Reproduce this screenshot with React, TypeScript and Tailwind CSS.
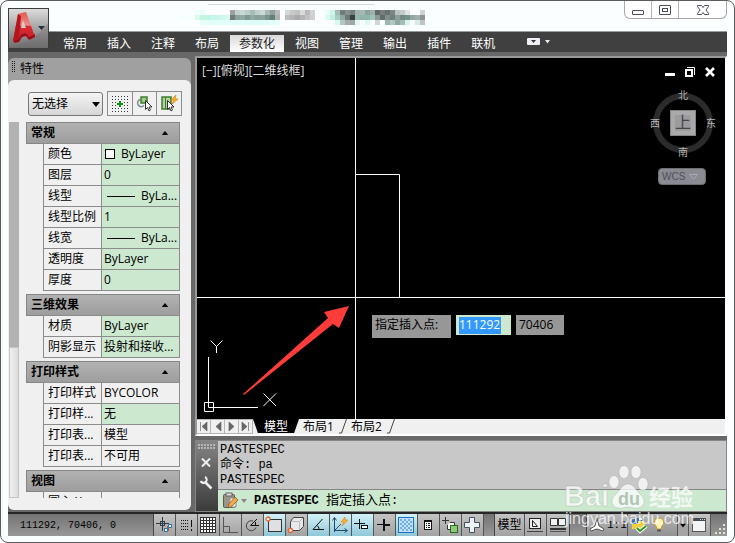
import React from "react";

type Row = { label: string; value: string; kind?: "swatch" | "line" | "plain" };

const menuItems = [
  "常用",
  "插入",
  "注释",
  "布局",
  "参数化",
  "视图",
  "管理",
  "输出",
  "插件",
  "联机",
];

const sections: { title: string; rows: Row[] }[] = [
  {
    title: "常规",
    rows: [
      { label: "颜色", value: "ByLayer", kind: "swatch" },
      { label: "图层", value: "0" },
      { label: "线型", value: "ByLa...", kind: "line" },
      { label: "线型比例", value: "1" },
      { label: "线宽", value: "ByLa...", kind: "line" },
      { label: "透明度", value: "ByLayer" },
      { label: "厚度", value: "0" },
    ],
  },
  {
    title: "三维效果",
    rows: [
      { label: "材质", value: "ByLayer" },
      { label: "阴影显示", value: "投射和接收..." },
    ],
  },
  {
    title: "打印样式",
    rows: [
      { label: "打印样式", value: "BYCOLOR", kind: "plain" },
      { label: "打印样...", value: "无" },
      { label: "打印表...", value: "模型", kind: "plain" },
      { label: "打印表...", value: "不可用", kind: "plain" },
    ],
  },
  {
    title: "视图",
    rows: [{ label: "圆心 X...", value: "", kind: "plain" }],
  },
];

// pixelated document name, 5px blocks
const titleBlocks: [number, number, string][] = [
  [0, 5, "#f3fffb"],
  [15, 0, "#effffa"], [20, 0, "#eafff8"], [15, 5, "#d8fbee"], [20, 5, "#c8f3e3"], [25, 5, "#bff5e5"],
  [30, 5, "#c9f6e9"], [35, 5, "#caf6ea"], [40, 5, "#cff7ed"], [45, 5, "#d8f8f0"],
  [50, 0, "#9ba3a1"], [55, 0, "#c3cfcc"], [60, 0, "#c7d9d5"], [65, 0, "#bacfc9"], [70, 0, "#a9bdb9"],
  [75, 0, "#c0cfcc"], [80, 0, "#cbdad7"], [85, 0, "#a9b9b6"], [90, 0, "#91a19d"], [95, 0, "#b9bcbc"],
  [50, 5, "#6e7d79"], [55, 5, "#8aa29c"], [60, 5, "#91aba4"], [65, 5, "#7e9b92"], [70, 5, "#93aaa4"],
  [75, 5, "#87a09a"], [80, 5, "#8ba59e"], [85, 5, "#78958c"], [90, 5, "#617f76"], [95, 5, "#b0b3b2"],
  [20, 10, "#e4fff7"], [30, 10, "#e0fff8"], [40, 10, "#e3fff9"], [50, 10, "#dffdf8"], [60, 10, "#defdf8"],
  [70, 10, "#dcfcf7"], [80, 10, "#dffdf8"], [90, 10, "#e3fffb"],
  [105, 0, "#d5d5d5"], [110, 0, "#c9c9c9"], [115, 0, "#c2c2c2"], [120, 0, "#dadada"], [125, 0, "#b9b9b9"], [130, 0, "#d2d2d2"],
  [105, 5, "#bdbdbd"], [110, 5, "#b4b4b4"], [115, 5, "#a9a9a9"], [120, 5, "#b4b4b4"], [125, 5, "#c2c2c2"], [130, 5, "#cfcfcf"],
  [145, 0, "#e6fff8"], [150, 0, "#cdf6eb"], [155, 0, "#a8b8b4"], [160, 0, "#707e7a"], [165, 0, "#87908e"],
  [170, 0, "#727f7c"], [175, 0, "#9fb2ae"], [180, 0, "#a7b9b4"], [185, 0, "#8da29d"], [190, 0, "#9bb1ab"],
  [195, 0, "#606a68"], [200, 0, "#77807f"], [205, 0, "#69726f"], [210, 0, "#7c8785"], [215, 0, "#b9c5c3"], [220, 0, "#c2cac8"], [225, 0, "#dde5e3"], [240, 0, "#d2d2d2"],
  [145, 5, "#dffaf3"], [150, 5, "#bdf0df"], [155, 5, "#a8cdc3"], [160, 5, "#91a8a2"], [165, 5, "#6c7a77"],
  [170, 5, "#35423f"], [175, 5, "#9ab6af"], [180, 5, "#8fb5a9"], [185, 5, "#8db7aa"], [190, 5, "#a1c0b7"],
  [195, 5, "#899a96"], [200, 5, "#5e6e6a"], [205, 5, "#7f8e8b"], [210, 5, "#6d8079"], [215, 5, "#8da09b"], [220, 5, "#738a84"], [225, 5, "#75938b"], [230, 5, "#91aaa4"], [235, 5, "#a2b1ad"], [240, 5, "#8d9391"],
  [155, 10, "#d6f8ef"], [160, 10, "#b7c7c3"], [165, 10, "#a4adab"], [170, 10, "#9ca9a6"], [175, 10, "#e0f7f2"], [185, 10, "#dafaf4"], [195, 10, "#cdd8d6"],
  [205, 10, "#9fb5af"], [210, 10, "#b4c6c2"], [215, 10, "#8fa8a1"], [220, 10, "#a4bdb6"], [225, 10, "#d9f2ed"], [235, 10, "#d9ebe7"], [240, 10, "#c1c3c2"],
];

const Triangle: React.FC<{ up?: boolean; className?: string }> = ({ up, className }) => (
  <svg width="8" height="5" viewBox="0 0 8 5" className={className}>
    <path d={up ? "M0 5 4 0 8 5Z" : "M0 0h8L4 5Z"} fill="currentColor" />
  </svg>
);

const TitleBar: React.FC = () => (
  <header className="relative h-[30px] flex justify-end">
    <svg width="265" height="28" className="absolute left-[172px] top-0" shapeRendering="crispEdges">
      <rect x="28" y="3" width="166" height="1" fill="#d5d8da" />
      <g transform="translate(0 9)">
        {titleBlocks.map(([x, y, fill]) => (
          <rect key={`${x}-${y}`} x={x} y={y} width={y === 10 && x < 100 ? 10 : 5} height="5" fill={fill} />
        ))}
      </g>
    </svg>
    <div className="flex h-[18px] rounded-b-md border border-t-0 border-[#a6a6a6] bg-white text-[#4b4b62]">
      <button aria-label="最小化" className="w-[27px] flex items-center justify-center border-r border-[#b4b4b4]">
        <svg width="12" height="12" viewBox="0 0 12 12" fill="#fff" stroke="currentColor">
          <rect x=".5" y="6.5" width="11" height="4" rx=".5" />
        </svg>
      </button>
      <button aria-label="最大化" className="w-[27px] flex items-center justify-center border-r border-[#b4b4b4]">
        <svg width="12" height="12" viewBox="0 0 12 12" fill="#fff" stroke="currentColor">
          <rect x=".5" y="1.5" width="11" height="9" rx=".5" />
          <rect x="3.5" y="4.5" width="5" height="3" />
        </svg>
      </button>
      <button aria-label="关闭" className="w-[47px] flex items-center justify-center">
        <svg width="12" height="12" viewBox="0 0 12 12" fill="#fff" stroke="currentColor">
          <path d="M.5 1.5h4L6 3.500 7.500 1.500h4v1L9 6l2.500 3.500v1h-4L6 8.500 4.500 10.500h-4v-1L3 6 .5 2.500Z" />
        </svg>
      </button>
    </div>
  </header>
);

const AppButton: React.FC = () => (
  <button
    aria-label="应用程序菜单"
    className="absolute left-[7px] top-[7px] z-10 w-[41px] h-[41px] border border-[#3c3c3c] bg-linear-to-b from-[#dcdcdc] to-[#6e6e6e]"
  >
    <svg width="39" height="39" viewBox="0 0 39 39">
      <defs>
        <linearGradient id="red" x1="0" y1="0" x2="0" y2="1">
          <stop offset="0" stopColor="#e2584f" />
          <stop offset=".45" stopColor="#ee8a84" />
          <stop offset=".5" stopColor="#d92b30" />
          <stop offset="1" stopColor="#c8202a" />
        </linearGradient>
      </defs>
      <path d="M0 39C12 36 30 28 39 14V39Z" fill="#6a6a6a" opacity=".35" />
      <path d="M4 32 9 5 17 3 26 28 20 30 17 24 12 25 10 32Z" fill="url(#red)" />
      <path d="M4 32 9 5 12 7 10 30Z" fill="#b5161d" />
      <path d="M12 19 14 11 17 19Z" fill="#d5cccc" />
      <path d="M4 32 10 30 12 25 17 24 20 28 26 25V28L20 31 17 27 13 28 10 33 6 34Z" fill="#9c0d16" />
      <path d="M29 17h7l-3.500 4Z" fill="#26303c" />
    </svg>
  </button>
);

const MenuBar: React.FC = () => (
  <nav className="flex h-[21px] items-stretch border-t border-[#9a9a9a] bg-[#404040] pl-[45px] text-white">
    {menuItems.map((item) => (
      <a
        key={item}
        href="#"
        className={
          item === "参数化"
            ? "mx-px mt-[3px] px-[9px] leading-[17px] bg-linear-to-b from-[#d8d8d8] to-white text-[#222]"
            : "mt-[3px] px-[10px] leading-[17px]"
        }
      >
        {item}
      </a>
    ))}
    <button aria-label="功能区" className="ml-[22px] flex items-center gap-[5px]">
      <svg width="13" height="8" viewBox="0 0 13 8">
        <rect width="13" height="7" rx="1" fill="#eef0f5" />
        <path d="M4 2h5L6.500 5Z" fill="#333" />
      </svg>
      <svg width="5" height="4" viewBox="0 0 5 4">
        <path d="M0 0h5L2.500 3.500Z" fill="#e6ebf5" />
      </svg>
    </button>
  </nav>
);

const Section: React.FC<{ title: string; rows: Row[] }> = ({ title, rows }) => (
  <section className="mb-[3px]">
    <h2 className="flex h-[22px] items-center justify-between border border-[#868686] bg-linear-to-b from-[#b2b2b2] to-[#9d9d9d] pl-1 pr-[10px] font-bold">
      {title}
      <Triangle up className="h-1" />
    </h2>
    <table className="-mt-px ml-[17px] w-[137px] table-fixed border-collapse">
      <tbody>
        {rows.map(({ label, value, kind }, i) => (
          <tr key={i} className="h-[21px]">
            <th scope="row" className="w-[58px] whitespace-nowrap border border-[#8c8c8c] p-0 pl-1 text-left font-normal leading-4">
              {label}
            </th>
            <td className={`border border-[#8c8c8c] p-0 pl-[2px] leading-4 ${kind === "plain" ? "" : "bg-[#cce8cf]"}`}>
              <span className="flex items-center whitespace-nowrap">
                {kind === "swatch" && <i className="ml-px mr-[6px] h-[10px] w-[10px] border border-black bg-white" />}
                {kind === "line" && <i className="ml-[3px] mr-[6px] h-px w-7 bg-black" />}
                {value}
              </span>
            </td>
          </tr>
        ))}
      </tbody>
    </table>
  </section>
);

const Palette: React.FC = () => (
  <aside className="mt-[2px] w-[183px] shrink-0 self-start overflow-hidden rounded-md bg-[#a0a0a0]">
    <div className="flex h-[22px] items-center gap-[5px] pl-1">
      <svg width="3" height="12" viewBox="0 0 3 12" className="mb-1">
        <path d="M.5 0v12M2.500 0v12" stroke="#222" strokeDasharray="1 1" />
      </svg>
      特性
    </div>
    <div className="rounded-t-md bg-[#f0f0f0] pb-3 pt-[11px]">
      <div className="flex h-[25px] items-center gap-1 pl-5">
        <label className="relative block">
          <span className="sr-only">选择对象</span>
          <select className="block h-6 w-[75px] appearance-none rounded-[3px] border border-[#777] bg-linear-to-b from-[#f4f4f4] to-[#d6d6d6] pl-[3px] leading-[22px]">
            <option>无选择</option>
          </select>
          <Triangle className="pointer-events-none absolute right-[3px] top-[10px]" />
        </label>
        <div className="flex border border-[#8c8c8c]">
          <button aria-label="快速选择" className="flex h-[23px] w-6 items-center justify-center">
            <svg width="16" height="16" viewBox="0 0 16 16" fill="none">
              <path d="M0 .5h16M0 15.500h16M.5 0v16M15.500 0v16" stroke="#333" strokeDasharray="1 2" />
              <path d="M3 3.500h10M3 12.500h10M3.500 3v10M12.500 3v10" stroke="#444" strokeDasharray="1 2" />
              <path d="M8 5v6M5 8h6" stroke="#0a9a12" strokeWidth="2" />
            </svg>
          </button>
          <button aria-label="选择对象" className="flex h-[23px] w-[25px] items-center justify-center border-x border-[#8c8c8c]">
            <svg width="17" height="17" viewBox="0 0 17 17" fill="none">
              <path d="M4 4.500A3.700 3.700 0 1 0 8 10.500" stroke="#7b8b97" strokeWidth="1.500" />
              <rect x="5" y="2" width="6" height="6" fill="#a5c98d" stroke="#3c7d2c" strokeWidth="1.500" />
              <path d="M9.500 5.500v9l2-2 1.500 3.500 1.500-1-1.500-3h3Z" fill="#fff" stroke="#333" />
            </svg>
          </button>
          <button aria-label="切换" className="flex h-[23px] w-6 items-center justify-center">
            <svg width="17" height="17" viewBox="0 0 17 17" fill="none">
              <path d="M1 2h9v12H1Z" fill="#b5d19f" stroke="#3c7d2c" strokeWidth="1.500" />
              <path d="M4.500 2v12" stroke="#3c7d2c" />
              <path d="M15 0 10 5h3l-2 4 6-5h-3Z" fill="#ffb62e" stroke="#d98200" strokeWidth=".7" />
              <path d="M6.500 5.500v9l2-2 1.500 3.500 1.500-1-1.500-3h3Z" fill="#fff" stroke="#333" />
            </svg>
          </button>
        </div>
      </div>
      <div className="mt-[6px] flex h-[376px] gap-[7px] overflow-hidden pl-px">
        <div className="flex w-[10px] shrink-0 flex-col bg-[#b2b2b2] pt-[225px]">
          <div className="flex-1 border border-[#c4c4c4] bg-linear-to-r from-[#eee] to-[#ddd]" />
        </div>
        <div className="w-[154px]">
          {sections.map((s) => (
            <Section key={s.title} {...s} />
          ))}
        </div>
      </div>
    </div>
  </aside>
);

const ViewCube: React.FC = () => (
  <div className="absolute right-[9px] top-7 text-[10px] leading-[10px] text-[#b5b5b5]">
    <div className="relative h-[74px] w-[66px]">
      <svg width="66" height="74" viewBox="0 0 66 74">
        <circle cx="33" cy="37" r="27" fill="none" stroke="#2b2b2b" strokeWidth="6" />
        <rect x="20.500" y="24.500" width="25" height="25" fill="#a9a9a9" stroke="#858585" />
        <rect x="25" y="29" width="16" height="16" fill="#9b9ca0" />
      </svg>
      <span className="absolute left-[28px] top-1">北</span>
      <span className="absolute left-[28px] top-[61px]">南</span>
      <span className="absolute left-0 top-8">西</span>
      <span className="absolute right-0 top-8">东</span>
      <span className="absolute left-[25px] top-[28px] text-base leading-4 text-[#444]">上</span>
    </div>
    <button className="ml-2 mt-2 flex h-[17px] w-[48px] items-center gap-1 rounded border border-[#6d6d72] bg-[#8a8a93] pl-[3px] font-['Liberation_Sans',sans-serif] text-[10px] text-[#50505a]">
      WCS
      <svg width="9" height="6" viewBox="0 0 9 6">
        <path d="M.5.5h8L4.500 5Z" fill="none" stroke="#a7aab4" />
      </svg>
    </button>
  </div>
);

const Drawing: React.FC = () => (
  <main className="relative min-h-[361px] flex-1 overflow-hidden bg-black">
    <svg className="absolute inset-0 h-full w-full" fill="none" stroke="#fff">
      <path d="M158.500 0V2000M0 239.500H4000M158.500 116.500H202.500V239.500" />
      <path d="M11.500 299V349.500H61M7.500 344.500h9v9h-9ZM13.500 282.500 19.500 288.500 25.500 282.500M19.500 288.500V295M66.500 335.500 79 348M79 335.500 66.500 348" />
      <path d="M152 248 127 254 131 260 46 336 47 337 136 266 142 270Z" fill="#fb3c38" stroke="none" />
    </svg>
    <div className="absolute left-[5px] top-[5px] leading-4 text-[#ddd]">[−][俯视][二维线框]</div>
    <div className="absolute right-[10px] top-[9px] flex gap-[10px] text-white">
      <button aria-label="最小化窗口">
        <svg width="10" height="10" viewBox="0 0 10 10">
          <path d="M0 7.500h10" stroke="currentColor" strokeWidth="3" />
        </svg>
      </button>
      <button aria-label="还原窗口">
        <svg width="10" height="10" viewBox="0 0 10 10" fill="none" stroke="currentColor">
          <rect x="1" y="3" width="6" height="6" strokeWidth="2" />
          <path d="M2 .5h7.500V8" />
        </svg>
      </button>
      <button aria-label="关闭窗口">
        <svg width="10" height="10" viewBox="0 0 10 10">
          <path d="M1 1 9 9M9 1 1 9" stroke="currentColor" strokeWidth="2.500" />
        </svg>
      </button>
    </div>
    <ViewCube />
    <div className="absolute left-[175px] top-[257px] flex items-start gap-[5px] leading-5">
      <label htmlFor="px" className="h-[23px] w-[79px] bg-[#979797] pl-[3px]">
        指定插入点:
      </label>
      <div className="flex h-5 w-[55px] items-center bg-[#cce8cf] pl-[3px]">
        <input id="px" defaultValue="111292" className="h-[17px] w-[42px] bg-[#3399ff] text-white outline-none" />
      </div>
      <input aria-label="Y" defaultValue="70406" className="h-5 w-12 bg-[#979797] pl-[3px] outline-none" />
    </div>
  </main>
);

const Slash: React.FC = () => (
  <svg width="8" height="15" viewBox="0 0 8 15" className="shrink-0">
    <path d="M7.500 0 2.500 14H0" fill="none" stroke="#444" />
  </svg>
);

const LayoutTabs: React.FC = () => (
  <div className="flex h-[15px] shrink-0 bg-[#f0f0f0] leading-[15px]">
    {["M3.500 3v9M10 3v9L5 7.500Z", "M10 3v9L5 7.500Z", "M4 3v9L9 7.500Z", "M9.500 3v9M3 3v9L8 7.500Z"].map((d, i) => (
      <button key={i} aria-label={["第一个", "上一个", "下一个", "最后一个"][i]} className="flex w-[14px] items-center justify-center border border-l-0 border-[#b5b5b5]">
        <svg width="13" height="15" viewBox="0 0 13 15" className="shrink-0">
          <path d={d} fill="#666" stroke="#666" strokeWidth=".7" />
        </svg>
      </button>
    ))}
    <button className="relative w-[46px] text-white">
      <svg viewBox="0 0 47 15" preserveAspectRatio="none" className="absolute inset-0 h-full w-full">
        <path d="M0 0h47l-5 14H5Z" fill="#000" />
      </svg>
      <span className="relative">模型</span>
    </button>
    <button className="pl-1 pr-[5px]">布局1</button>
    <Slash />
    <button className="pl-1 pr-[5px]">布局2</button>
    <Slash />
  </div>
);

const CommandLine: React.FC = () => (
  <div className="mt-1 flex h-[72px] shrink-0 border border-[#858585] bg-[#c8c8c8] font-['Liberation_Mono','Noto_Sans_CJK_SC',monospace] text-[12px]">
    <div className="flex w-[22px] shrink-0 flex-col items-center bg-linear-to-b from-[#858585] to-[#3c3c3c] pt-[3px] pr-[2px] text-[#f0f0f0]">
      <svg width="17" height="6" viewBox="0 0 17 6">
        <path d="M0 1h17M0 4h17" stroke="#b5b5b5" strokeWidth="2" strokeDasharray="2 1" />
      </svg>
      <button aria-label="关闭命令行" className="mt-2">
        <svg width="10" height="9" viewBox="0 0 10 9">
          <path d="M1 .5 9 8.500M9 .5 1 8.500" stroke="currentColor" strokeWidth="2" />
        </svg>
      </button>
      <button aria-label="自定义" className="mt-[9px]">
        <svg width="14" height="14" viewBox="0 0 14 14" fill="none" stroke="currentColor">
          <path d="M6.500 6.500 12.500 12.500" strokeWidth="2.500" />
          <path d="M5 1A3 3 0 1 1 1 5" transform="translate(1 0)" strokeWidth="2" />
          <path d="M1 5.500 4 7.500 7 6" strokeWidth="1.500" />
        </svg>
      </button>
    </div>
    <div className="flex flex-1 flex-col">
      <div className="flex-1 pl-[2px] pt-[2px] leading-[15px]">
        <p>PASTESPEC</p>
        <p>
          <span className="text-[12px]">命令</span>: pa
        </p>
        <p>PASTESPEC</p>
      </div>
      <div className="flex h-[22px] items-center border-t border-[#858585] bg-[#cce8cf] pl-1">
        <svg width="27" height="17" viewBox="0 0 27 17">
          <rect x="1.500" y="2.500" width="11" height="13" rx="1" fill="#9b9488" stroke="#5c5852" />
          <rect x="4" y="1" width="6" height="3" fill="#ddd" stroke="#666" />
          <path d="M9 6h5v9H7" fill="#f1f1ea" stroke="#888" />
          <path d="M6 16 7 12 13 5 16 8 10 14Z" fill="#f0a94b" stroke="#8b4e16" strokeWidth=".7" />
          <path d="M19 7h6l-3 4Z" fill="#888" />
        </svg>
        <label htmlFor="cmd" className="ml-[5px] whitespace-pre">
          <b>PASTESPEC</b> <span className="text-[13px]">指定插入点</span>:
        </label>
        <input id="cmd" className="min-w-0 flex-1 bg-transparent outline-none" />
      </div>
    </div>
  </div>
);

const statusIcons: { name: string; on?: boolean; icon: React.ReactNode }[] = [
  {
    name: "推断约束",
    icon: (
      <>
        <path d="M6.500 0v14M0 6.500h13" stroke="#2d3a48" />
        <rect x="4.500" y="4.500" width="4" height="4" stroke="#2d3a48" />
        <path d="M12 9v5" stroke="#d2451e" strokeWidth="2" />
        <rect x="12.500" y="7.500" width="3" height="3" fill="#fff" stroke="#2a79c4" />
        <rect x="8.500" y="11.500" width="3" height="3" fill="#fff" stroke="#2a79c4" />
      </>
    ),
  },
  {
    name: "捕捉",
    icon: (
      <>
        <path d="M3 3.500h8M3 6.500h8M3 9.500h8M3 12.500h8" stroke="#111" strokeDasharray="1 1" />
        <path d="M13.500 3v7M13.500 12v2" stroke="#111" />
      </>
    ),
  },
  {
    name: "栅格",
    icon: (
      <>
        <rect x=".5" y=".5" width="15" height="15" fill="#fff" stroke="#333" />
        <path d="M3.500 0v16M6.500 0v16M9.500 0v16M12.500 0v16M0 3.500h16M0 6.500h16M0 9.500h16M0 12.500h16" stroke="#333" />
      </>
    ),
  },
  { name: "正交", icon: <path d="M1.500 0v15.500H16M1.500 9.500h6v6" stroke="#555" /> },
  {
    name: "极轴",
    icon: (
      <>
        <path d="M9 4A5 5 0 1 0 12 10.500" stroke="#444" />
        <path d="M13 2 6.500 8.500H15M11.500 5v4" stroke="#111" />
      </>
    ),
  },
  {
    name: "对象捕捉",
    on: true,
    icon: (
      <>
        <rect x="2.500" y="2.500" width="13" height="12" fill="#e0e0e3" stroke="#333" />
        <circle cx="2" cy="2" r="2" fill="#fff" stroke="#e8622b" strokeWidth="1.300" />
      </>
    ),
  },
  {
    name: "三维对象捕捉",
    icon: (
      <>
        <path d="M2.500 4.500 5.500.5h10v9l-4 4h-9Z" fill="#e8e8ea" stroke="#444" />
        <path d="M3 4.500h8.500v8.500M11.500 4.500l3.500-3.500" stroke="#bbb" />
        <circle cx="2.500" cy="13.500" r="2" fill="#fff" stroke="#e8622b" strokeWidth="1.300" />
      </>
    ),
  },
  { name: "对象追踪", on: true, icon: <path d="M12.500 2 3 12.500h11M7 8.500q2 1 2 4" stroke="#111" /> },
  {
    name: "动态 UCS",
    on: true,
    icon: (
      <>
        <path d="M2.500 15V1M.5 3.500l2-3 2 3M2 13.500h13M12.500 11.500l3 2-3 2M2.500 13.500 9 7" stroke="#234a68" />
        <path d="M13 0 9 5h3l-2 4 6-6h-3Z" fill="#ffb52e" stroke="#e08a1a" strokeWidth=".7" />
      </>
    ),
  },
  {
    name: "动态输入",
    on: true,
    icon: (
      <>
        <path d="M5.500 2v10M0 6.500h11" stroke="#111" />
        <rect x="7.500" y="8.500" width="6" height="3" fill="#fff" stroke="#111" />
      </>
    ),
  },
  {
    name: "线宽",
    icon: (
      <>
        <path d="M1 7.500h6" stroke="#111" />
        <path d="M7 8h7M8 2v12" stroke="#111" strokeWidth="2" />
      </>
    ),
  },
  {
    name: "透明度显示",
    on: true,
    icon: (
      <>
        <rect x=".5" y=".5" width="15" height="15" fill="#c4e1f6" stroke="#1c6fc9" />
        <path d="M2 3h12M2 7h12M2 11h12" stroke="#6fb0e0" strokeWidth="2" strokeDasharray="2 2" />
        <path d="M4 5h10M4 9h10M4 13h10" stroke="#6fb0e0" strokeWidth="2" strokeDasharray="2 2" />
      </>
    ),
  },
  {
    name: "快捷特性",
    icon: (
      <>
        <rect x="4.500" y="3.500" width="7" height="9" fill="#fff" stroke="#111" />
        <path d="M4 4.500h8" stroke="#111" />
        <path d="M6 6.500h1M8 6.500h2M6 8.500h1M8 8.500h2M6 10.500h1M8 10.500h2" stroke="#111" />
      </>
    ),
  },
  {
    name: "选择循环",
    icon: (
      <>
        <path d="M3.500 0v7M0 3.500h7" stroke="#333" />
        <path d="M8 5.500h4.500v3H8.500v4h-3V8" fill="#fff" stroke="#333" />
        <rect x="8.500" y="8.500" width="7" height="7" fill="#8fc77a" stroke="#26701a" />
      </>
    ),
  },
  { name: "注释监视器", icon: <path d="M5.500.500h5v5h5v5h-5v5h-5v-5h-5v-5h5Z" fill="#eef1f5" stroke="#44505e" /> },
];

const Icon: React.FC<{ children: React.ReactNode }> = ({ children }) => (
  <svg width="16" height="16" viewBox="0 0 16 16" fill="none" className="shrink-0 overflow-visible">
    {children}
  </svg>
);

const StatusBar: React.FC = () => (
  <footer className="flex h-6 border-t-2 border-[#262626] bg-linear-to-b from-[#747474] to-[#989898]">
    <div className="w-[146px] shrink-0 whitespace-pre border-r border-[#444] pl-3 font-['Liberation_Mono',monospace] text-[10px] leading-6">
      111292, 70406, 0
    </div>
    {statusIcons.map(({ name, on, icon }) => (
      <button
        key={name}
        aria-label={name}
        className={`flex w-[22px] shrink-0 items-center justify-center border-r border-[#555] pr-px ${
          on ? "bg-linear-to-b from-[#d4f1f8] to-[#8fc8d8]" : "bg-linear-to-b from-[#c4c4c4] to-[#a2a2a2]"
        }`}
      >
        <Icon>{icon}</Icon>
      </button>
    ))}
    <div className="flex-1 border-r border-[#444]" />
    <button className="w-[30px] shrink-0 whitespace-nowrap border-r border-[#555] bg-linear-to-b from-[#c4c4c4] to-[#a2a2a2] text-center">模型</button>
    <button aria-label="布局" className="flex w-[22px] shrink-0 items-center justify-center border-r border-[#555] bg-linear-to-b from-[#c4c4c4] to-[#a2a2a2] pr-px">
      <Icon>
        <rect x="2.500" y="1.500" width="11" height="10" fill="#eee" stroke="#222" />
        <path d="M5.500 3.500v6h5Z" stroke="#222" />
        <path d="M0 14.500h16" stroke="#444" />
      </Icon>
    </button>
    <button aria-label="快速查看" className="flex w-[22px] shrink-0 items-center justify-center bg-linear-to-b from-[#c4c4c4] to-[#a2a2a2]">
      <Icon>
        <path d="M.5 1.500h7v7h-7ZM8.500 1.500h7v7h-7Z" fill="#f2f2f2" stroke="#333" />
        <path d="M0 12h16" stroke="#333" strokeWidth="2" />
        <path d="M0 14.500h16" stroke="#555" />
      </Icon>
    </button>
    <div className="w-[18px] shrink-0 border-x border-[#444]" />
    <button className="flex w-10 shrink-0 items-center gap-[2px] bg-linear-to-b from-[#b8b8b8] to-[#969696] pl-[2px] font-['Liberation_Mono',monospace]">
      <Icon>
        <path d="M8 1 10 9 15 12 14 14 8 12 2 14 1 12 6 9Z" fill="#fff" stroke="#555" />
      </Icon>
      <span className="text-[11px]">1:1</span>
    </button>
    <div className="flex w-[51px] shrink-0 items-center gap-1 border-x border-[#555] bg-linear-to-b from-[#b4b4b4] to-[#929292] pl-[3px]">
      <button aria-label="注释比例">
        <Icon>
          <rect x="1" y="1" width="12" height="11" rx="1" fill="#3b6ea8" />
          <path d="M1 7h6V4h6v8H1Z" fill="#f2cf3c" />
          <path d="M4 3h1M8 2h3" stroke="#fff" strokeWidth="2" />
          <path d="m6 11 3 3 6-5" stroke="#fff" strokeWidth="4" />
          <path d="m6 11 3 3 6-5" stroke="#2f9a1c" strokeWidth="2" />
        </Icon>
      </button>
      <button aria-label="隔离对象">
        <Icon>
          <path d="M8 1a4.500 4.500 0 0 1 3 8l-1 3H6L5 9a4.500 4.500 0 0 1 3-8Z" fill="#fff2b0" stroke="#c79b32" />
          <path d="M6 13.500h4" stroke="#555" strokeWidth="2" />
        </Icon>
      </button>
    </div>
    <button aria-label="状态栏菜单" className="flex w-[11px] shrink-0 items-center justify-center border-r border-[#555] bg-[#a4a4a4]">
      <Triangle className="w-[6px]" />
    </button>
    <button aria-label="全屏显示" className="flex w-[22px] shrink-0 items-center justify-center border-r border-[#555] bg-linear-to-b from-[#c4c4c4] to-[#a2a2a2] pr-px">
      <Icon>
        <rect x="1.500" y="1.500" width="13" height="13" fill="#f4f4f4" stroke="#555" />
        <path d="M1 2.500h14" stroke="#454a55" strokeWidth="3" />
        <path d="M9 2.500h5" stroke="#ddd" strokeDasharray="1 1" />
      </Icon>
    </button>
    <svg width="16" height="22" viewBox="0 0 16 22" className="shrink-0">
      <path d="M12 11h2M8 15h2M12 15h2M4 19h2M8 19h2M12 19h2" stroke="#e5e0d0" strokeWidth="2" />
    </svg>
  </footer>
);

const Watermark: React.FC = () => (
  <svg
    width="136"
    height="72"
    viewBox="0 0 136 72"
    fill="#fff"
    className="pointer-events-none absolute bottom-[8px] right-[34px] font-['Liberation_Sans','Noto_Sans_CJK_SC',sans-serif] opacity-75"
  >
    <g stroke="#9a9a9a" strokeOpacity=".4">
      <ellipse cx="50" cy="20" rx="5" ry="6.500" />
      <ellipse cx="60" cy="10" rx="5" ry="6.500" />
      <ellipse cx="72" cy="10" rx="5" ry="6.500" />
      <ellipse cx="79" cy="22" rx="5" ry="6.500" />
      <path d="M64 22c6 0 8 7 13 11 5 5 4 12-3 13-4 1-6-1-10-1s-6 2-10 1c-7-1-8-8-3-13 5-4 7-11 13-11Z" />
      <text x="0" y="44" fontSize="29" fontWeight="bold">
        Bai
      </text>
    </g>
    <text x="54" y="43" fontSize="18" fontWeight="bold" fill="#a9b8aa">
      du
    </text>
    <text x="85" y="43" fontSize="22" fontWeight="bold">
      经验
    </text>
    <text x="1" y="62" fontSize="16">
      jingyan.baidu.com
    </text>
  </svg>
);

export default function App() {
  return (
    <div className="relative flex min-h-screen flex-col overflow-hidden rounded-lg border border-[#5c5c5c] bg-[#fbfeff] px-[7px] pb-[6px] font-['Open_Sans','Noto_Sans_CJK_SC',sans-serif] text-[12px] text-black">
      <AppButton />
      <TitleBar />
      <MenuBar />
      <div className="flex flex-1 items-stretch gap-1 bg-[#686868] pt-1">
        <Palette />
        <div className="flex min-w-0 flex-1 flex-col">
          <div className="flex flex-1 flex-col border-2 border-[#999] border-b-white border-r-white">
            <Drawing />
            <LayoutTabs />
          </div>
          <CommandLine />
        </div>
      </div>
      <StatusBar />
      <Watermark />
    </div>
  );
}
